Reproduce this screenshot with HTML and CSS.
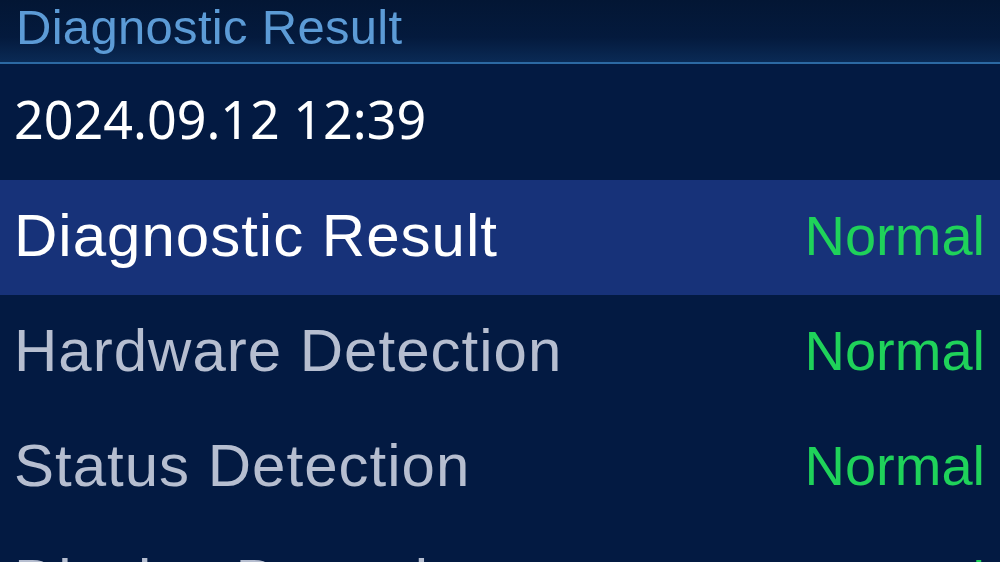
FILE: index.html
```html
<!DOCTYPE html>
<html lang="en">
<head>
<meta charset="utf-8">
<title>Diagnostic Result</title>
<link rel="stylesheet" href="styles.css">
</head>
<body>
<div class="screen">
  <header class="title-bar">
    <h1 class="title">Diagnostic Result</h1>
  </header>
  <div class="timestamp">2024.09.12 12:39</div>
  <ul class="results">
    <li class="row row-active"><span class="label">Diagnostic Result</span><span class="status">Normal</span></li>
    <li class="row"><span class="label">Hardware Detection</span><span class="status">Normal</span></li>
    <li class="row"><span class="label">Status Detection</span><span class="status">Normal</span></li>
    <li class="row"><span class="label">Display Detection</span><span class="status">Normal</span></li>
  </ul>
</div>
</body>
</html>
```

FILE: styles.css
```css
html, body {
  margin: 0;
  padding: 0;
  background: #031a42;
}

.screen {
  width: 1000px;
  height: 562px;
  overflow: hidden;
  background: #031a42;
  font-family: "Liberation Sans", Arial, sans-serif;
  display: flex;
  flex-direction: column;
}

.title-bar {
  height: 64px;
  flex: none;
  box-sizing: border-box;
  padding-left: 16px;
  background: linear-gradient(to bottom, #031634 0%, #041a3d 60%, #0a2a55 100%);
  border-bottom: 2px solid #2c69a3;
}

.title {
  margin: 0;
  font-weight: normal;
  font-size: 49px;
  line-height: 54px;
  letter-spacing: 0.3px;
  color: #5c9bd6;
}

.timestamp {
  height: 116px;
  flex: none;
  box-sizing: border-box;
  display: flex;
  align-items: center;
  padding: 0 0 6px 14px;
  font-family: "Noto Sans", "Open Sans", sans-serif;
  font-size: 52px;
  font-weight: 400;
  line-height: 1;
  color: #ffffff;
}

.results {
  list-style: none;
  margin: 0;
  padding: 0;
}

.row {
  height: 115px;
  display: flex;
  align-items: center;
  justify-content: space-between;
  padding: 0 15px 4px 14px;
  box-sizing: border-box;
  font-size: 60px;
  line-height: 1;
}

.row-active {
  background: #173279;
}

.label {
  letter-spacing: 1px;
  color: #b6bed0;
}

.row-active .label {
  color: #ffffff;
}

.status {
  font-size: 56px;
  color: #1fd25a;
}
```
